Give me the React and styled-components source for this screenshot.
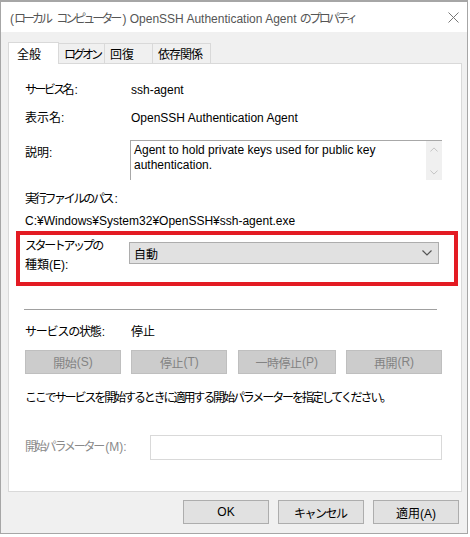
import React from "react";
import styled, { createGlobalStyle } from "styled-components";

const GlobalStyle = createGlobalStyle`
  body {
    margin: 0;
    background: #ffffff;
    font-family: "Liberation Sans", "Noto Sans CJK JP", sans-serif;
    font-size: 12px;
    color: #000;
  }
`;

// Japanese run squeezed to approximate the narrow kana of Yu Gothic UI
const Ja = styled.span`
  letter-spacing: ${(p) => p.$ls || 0}px;
  margin-right: ${(p) => -(p.$ls || 0)}px;
`;

const Window = styled.div`
  width: 468px;
  height: 534px;
  box-sizing: border-box;
  border: 1px solid #a6a6a6;
  border-top-width: 2px;
  background: #f0f0f0;
  display: flex;
  flex-direction: column;
`;

const TitleBar = styled.div`
  height: 30px;
  background: #ffffff;
  display: flex;
  align-items: center;
  justify-content: space-between;
  padding: 0 8px 0 9px;
  color: #555;
  font-size: 12px;
  white-space: nowrap;
`;

const Body = styled.div`
  padding: 9px 5px 0 7px;
  display: flex;
  flex-direction: column;
`;

const Tabs = styled.div`
  display: flex;
  align-items: flex-end;
  height: 22px;
`;

const Tab = styled.div`
  box-sizing: border-box;
  width: ${(p) => p.$w}px;
  height: ${(p) => (p.$active ? 22 : 20)}px;
  padding-left: ${(p) => (p.$active ? 8 : 5)}px;
  white-space: nowrap;
  display: flex;
  align-items: center;
  background: ${(p) => (p.$active ? "#ffffff" : "#f0f0f0")};
  border: 1px solid #d9d9d9;
  border-bottom: none;
  border-left-width: ${(p) => (p.$first || p.$active ? 1 : 0)}px;
  margin-bottom: ${(p) => (p.$active ? -1 : 0)}px;
  position: relative;
  z-index: ${(p) => (p.$active ? 1 : 0)};
`;

const Panel = styled.div`
  box-sizing: border-box;
  height: 429px;
  width: 454px;
  background: #ffffff;
  border: 1px solid #d9d9d9;
  padding: 16px 19px 0 16px;
  display: flex;
  flex-direction: column;
`;

const Row = styled.div`
  display: flex;
  align-items: ${(p) => (p.$top ? "flex-start" : "center")};
  margin-top: ${(p) => p.$mt || 0}px;
  min-height: 20px;
`;

const Label = styled.div`
  width: ${(p) => p.$w || 105}px;
  flex-shrink: 0;
  line-height: 19px;
  white-space: nowrap;
  padding-top: ${(p) => p.$pt || 0}px;
  color: ${(p) => (p.$disabled ? "#8a8a8a" : "#000")};
`;

const Value = styled.div`
  padding-left: 1px;
  line-height: 20px;
`;

const TextArea = styled.div`
  flex: 1;
  height: 40px;
  box-sizing: border-box;
  border-top: 1px solid #a8a8a8;
  border-left: 1px solid #a8a8a8;
  display: flex;
`;

const TextAreaText = styled.div`
  flex: 1;
  padding: 2px 0 0 3px;
  line-height: 15px;
`;

const ScrollBar = styled.div`
  width: 16px;
  background: #f0f0f0;
  display: flex;
  flex-direction: column;
  align-items: center;
  justify-content: space-between;
  padding: 6px 0 5px;
`;

const PathText = styled.div`
  line-height: 20px;
  margin-top: 2px;
`;

const Highlight = styled.div`
  margin: 0 -16px 0 -9px;
  border: 4px solid #e31b23;
  height: 55px;
  box-sizing: border-box;
  padding: 2px 15px 0 5px;
  display: flex;
  align-items: flex-start;
`;

const Select = styled.div`
  flex: 1;
  margin-top: 5px;
  height: 22px;
  box-sizing: border-box;
  background: #e1e1e1;
  border: 1px solid #adadad;
  display: flex;
  align-items: center;
  justify-content: space-between;
  padding: 0 6px 0 4px;
`;

const Separator = styled.div`
  height: 1px;
  background: #a0a0a0;
  margin: 23px 5px 0 -1px;
`;

const ButtonGrid = styled.div`
  display: grid;
  grid-template-columns: 96px 96px 98px 96px;
  justify-content: space-between;
  margin-top: 8px;
`;

const Button = styled.div`
  height: ${(p) => p.$h || 24}px;
  box-sizing: border-box;
  display: flex;
  align-items: center;
  justify-content: center;
  white-space: nowrap;
  background: ${(p) => (p.$disabled ? "#cccccc" : "#e1e1e1")};
  border: 1px solid ${(p) => (p.$disabled ? "#bfbfbf" : "#adadad")};
  color: ${(p) => (p.$disabled ? "#838383" : "#000")};
  width: ${(p) => (p.$w ? `${p.$w}px` : "auto")};
`;

const Note = styled.div`
  margin-top: 14px;
  line-height: 20px;
  white-space: nowrap;
`;

const InputBox = styled.div`
  flex: 1;
  height: 25px;
  box-sizing: border-box;
  border: 1px solid #d9d9d9;
  background: #fff;
`;

const Footer = styled.div`
  display: flex;
  justify-content: flex-end;
  gap: 9px;
  padding: 8px 3px 0 0;
`;

const Chevron = ({ up, color = "#c2c2c2", w = 9 }) => (
  <svg width={w} height={w / 2 + 1} viewBox="0 0 10 6">
    <path
      d={up ? "M0.5 5.5 L5 1 L9.5 5.5" : "M0.5 0.5 L5 5 L9.5 0.5"}
      fill="none"
      stroke={color}
      strokeWidth="1.2"
    />
  </svg>
);

const CloseIcon = () => (
  <svg width="11" height="11" viewBox="0 0 11 11">
    <path d="M0.5 0.5 L10.5 10.5 M10.5 0.5 L0.5 10.5" stroke="#777" strokeWidth="1" />
  </svg>
);

export default function App() {
  const tabs = [
    { name: "全般", w: 51, active: true, ls: 0 },
    { name: "ログオン", w: 46, ls: -3 },
    { name: "回復", w: 48, ls: 0 },
    { name: "依存関係", w: 58, ls: -1 },
  ];
  const controls = [
    ["開始", "(S)"],
    ["停止", "(T)"],
    ["一時停止", "(P)"],
    ["再開", "(R)"],
  ];

  return (
    <>
      <GlobalStyle />
      <Window>
        <TitleBar>
          <span>
            (<Ja $ls={-3}>ローカル</Ja> <Ja $ls={-3}>コンピューター</Ja>) OpenSSH
            Authentication Agent <Ja $ls={-2.6}>のプロパティ</Ja>
          </span>
          <CloseIcon />
        </TitleBar>
        <Body>
          <Tabs>
            {tabs.map((t, i) => (
              <Tab key={t.name} $w={t.w} $active={t.active} $first={i === 0}>
                <Ja $ls={t.ls}>{t.name}</Ja>
              </Tab>
            ))}
          </Tabs>
          <Panel>
            <Row>
              <Label>
                <Ja $ls={-2.6}>サービス名</Ja>:
              </Label>
              <Value>ssh-agent</Value>
            </Row>
            <Row $mt={8}>
              <Label>表示名:</Label>
              <Value>OpenSSH Authentication Agent</Value>
            </Row>
            <Row $top $mt={12}>
              <Label $pt={4}>説明:</Label>
              <TextArea>
                <TextAreaText>
                  Agent to hold private keys used for public key
                  <br />
                  authentication.
                </TextAreaText>
                <ScrollBar>
                  <Chevron up w={8} />
                  <Chevron w={8} />
                </ScrollBar>
              </TextArea>
            </Row>
            <Row $mt={9}>
              <Label $w={300}>
                <Ja $ls={-2.3}>実行ファイルのパス</Ja>:
              </Label>
            </Row>
            <PathText>C:¥Windows¥System32¥OpenSSH¥ssh-agent.exe</PathText>
            <Highlight>
              <Label $w={104}>
                <Ja $ls={-2.4}>スタートアップの</Ja>
                <br />
                種類(E):
              </Label>
              <Select>
                <span>自動</span>
                <Chevron color="#555" w={10} />
              </Select>
            </Highlight>
            <Separator />
            <Row $mt={12}>
              <Label>
                <Ja $ls={-1.2}>サービスの状態</Ja>:
              </Label>
              <Value>停止</Value>
            </Row>
            <ButtonGrid>
              {controls.map(([ja, key]) => (
                <Button key={ja} $disabled>
                  <Ja $ls={-0.5}>{ja}</Ja>
                  {key}
                </Button>
              ))}
            </ButtonGrid>
            <Note>
              <Ja $ls={-2.1}>
                ここでサービスを開始するときに適用する開始パラメーターを指定してください。
              </Ja>
            </Note>
            <Row $mt={27}>
              <Label $w={125} $disabled>
                <Ja $ls={-2.2}>開始パラメーター</Ja>(M):
              </Label>
              <InputBox />
            </Row>
          </Panel>
          <Footer>
            <Button $w={86}>OK</Button>
            <Button $w={86}>
              <Ja $ls={-1.5}>キャンセル</Ja>
            </Button>
            <Button $w={86}>適用(A)</Button>
          </Footer>
        </Body>
      </Window>
    </>
  );
}
